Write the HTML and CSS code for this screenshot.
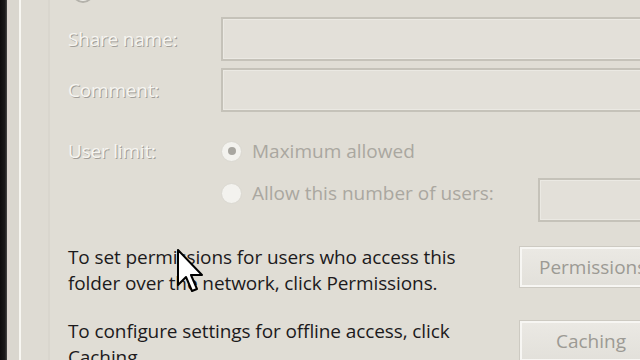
FILE: index.html
```html
<!DOCTYPE html>
<html>
<head>
<meta charset="utf-8">
<link rel="stylesheet" href="styles.css">
</head>
<body>
<div class="screen">
  <div class="edge"></div>
  <div class="frame"></div>
  <div class="dialog">
    <div class="top-radio"></div>
    <div class="form">
      <div class="label">Share name:</div>
      <div class="field"></div>
      <div class="label">Comment:</div>
      <div class="field"></div>
      <div class="label limit">User limit:</div>
      <div class="choices">
        <div class="choice"><span class="radio checked"></span><span class="choice-text">Maximum allowed</span></div>
        <div class="choice second"><span class="radio"></span><span class="choice-text">Allow this number of users:</span><span class="spin"></span></div>
      </div>
    </div>
    <div class="info">
      <p class="text">To set permissions for users who access this folder over the network, click Permissions.</p>
      <div class="btn">Permissions</div>
    </div>
    <div class="info second-info">
      <p class="text">To configure settings for offline access, click Caching.</p>
      <div class="btn center">Caching</div>
    </div>
  </div>
  <svg class="cursor" width="30" height="46" viewBox="0 0 30 46">
    <path d="M1 1 L1 36 L9 28 L15 42 L20 40 L14 26 L25 26 Z" fill="#fff" stroke="#000" stroke-width="2" stroke-linejoin="round"/>
  </svg>
</div>
</body>
</html>
```

FILE: styles.css
```css
html, body {
  margin: 0;
  padding: 0;
  width: 640px;
  height: 360px;
  overflow: hidden;
  background: #e0ddd5;
}
.screen {
  position: relative;
  display: flex;
  width: 640px;
  height: 360px;
  overflow: hidden;
  font-family: "Open Sans", "Noto Sans", sans-serif;
}
.edge {
  width: 7px;
  flex: none;
  background: linear-gradient(to right, #0c0c0c 0, #1a1a1a 5px, #4a4a48 7px);
}
.frame {
  width: 14px;
  flex: none;
  background: #dad7cf;
  border-right: 2px solid #f8f7f2;
  box-sizing: border-box;
}
.dialog {
  flex: 1;
  padding-left: 47px;
  position: relative;
  background: linear-gradient(to right, #dedbd3 0, #dedbd3 27px, #d9d6ce 27px, #d9d6ce 29px, #e0ddd5 29px);
}
.top-radio {
  width: 18px;
  height: 18px;
  border-radius: 50%;
  border: 2px solid #b4b2ab;
  background: #ecebe6;
  margin: -19px 0 0 4px;
}
.form {
  display: grid;
  grid-template-columns: 153px 1fr;
  row-gap: 7px;
  margin-top: 14px;
  margin-right: -40px;
}
.label {
  font-size: 19px;
  color: #f6f5f1;
  text-shadow: 1px 1px 0 #a29f99;
  display: flex;
  align-items: center;
  letter-spacing: -0.2px;
}
.label.limit {
  align-items: flex-start;
  padding-top: 18px;
  line-height: 28px;
}
.field {
  height: 40px;
  border: 2px solid #c5c2b9;
  box-shadow: inset 0 0 0 1px #ebe9e3;
  background: #e3e0d9;
}
.choices {
  padding-top: 18px;
  min-width: 0;
}
.choice {
  display: flex;
  align-items: center;
  height: 28px;
  font-size: 19px;
  color: #aaa7a0;
}
.choice-text {
  white-space: nowrap;
  flex: none;
}
.choice.second {
  margin-top: 14px;
}
.radio {
  width: 19px;
  height: 19px;
  border-radius: 50%;
  background: #f3f2ee;
  border: 1px solid #dad8d1;
  margin: 0 10px 0 0;
  flex: none;
  display: flex;
  align-items: center;
  justify-content: center;
}
.radio.checked::after {
  content: "";
  width: 8px;
  height: 8px;
  border-radius: 50%;
  background: #a8a6a0;
}
.spin {
  width: 140px;
  height: 40px;
  margin-left: 44px;
  align-self: flex-start;
  margin-top: -1px;
  margin-bottom: -15px;
  border: 2px solid #c5c2b9;
  box-shadow: inset 0 0 0 1px #ebe9e3;
  background: #e3e0d9;
  flex: none;
}
.info {
  display: flex;
  align-items: flex-start;
  margin-top: 37px;
  margin-right: -60px;
}
.second-info {
  margin-top: 22px;
}
.text {
  margin: 0;
  width: 420px;
  font-size: 19px;
  line-height: 26px;
  color: #1c1a1c;
  letter-spacing: -0.1px;
  flex: none;
}
.btn {
  margin-left: 31px;
  margin-top: 2px;
  width: 140px;
  height: 40px;
  border: 1px solid #cdcac2;
  box-shadow: inset 0 0 0 2px #f7f6f3;
  background: linear-gradient(#ebe9e4, #e2e0da);
  color: #9c9a94;
  font-size: 19px;
  display: flex;
  align-items: center;
  padding-left: 19px;
  flex: none;
  white-space: nowrap;
}
.btn.center {
  justify-content: center;
  padding-left: 0;
  width: 142px;
}
.cursor {
  position: absolute;
  left: 177px;
  top: 249px;
}
```
